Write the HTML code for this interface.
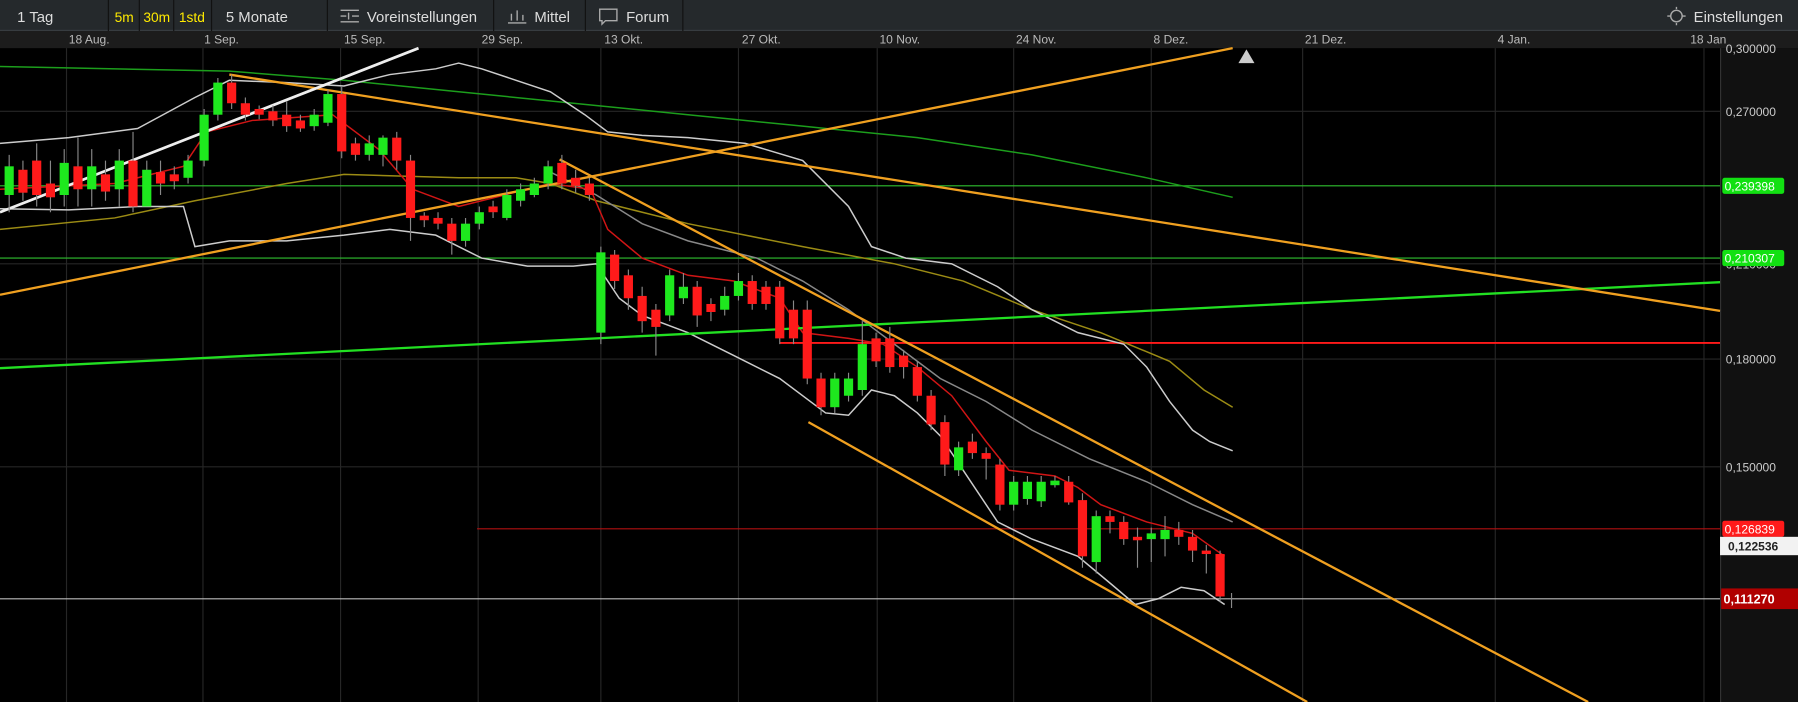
<!DOCTYPE html>
<html><head><meta charset="utf-8"><style>
html,body{margin:0;padding:0;background:#000;overflow:hidden}
svg{display:block}
text{font-family:"Liberation Sans",sans-serif}
</style></head><body>
<svg width="1798" height="702" viewBox="0 0 1568 612" preserveAspectRatio="none" xmlns="http://www.w3.org/2000/svg">
<rect width="1568" height="612" fill="#000"/>
<!-- toolbar -->
<rect x="0" y="0" width="1568" height="27" fill="#25292c"/>
<rect x="0" y="26" width="1568" height="1" fill="#3a3e42"/>
<g fill="#111">
<rect x="94" y="0" width="1" height="27"/><rect x="121" y="0" width="1" height="27"/><rect x="151" y="0" width="1" height="27"/><rect x="184" y="0" width="1" height="27"/><rect x="285" y="0" width="1" height="27"/><rect x="430" y="0" width="1" height="27"/><rect x="510" y="0" width="1" height="27"/><rect x="595" y="0" width="1" height="27"/>
</g>
<g font-size="13" fill="#ddd">
<text x="15" y="19">1 Tag</text>
<text x="100" y="19" fill="#ffea00" font-size="12">5m</text>
<text x="125" y="19" fill="#ffea00" font-size="12">30m</text>
<text x="156" y="19" fill="#ffea00" font-size="12">1std</text>
<text x="197" y="19">5 Monate</text>
<text x="320" y="19">Voreinstellungen</text>
<text x="466" y="19">Mittel</text>
<text x="546" y="19">Forum</text>
<text x="1477" y="19">Einstellungen</text>
</g>
<g stroke="#aaa" stroke-width="1.2" fill="none">
<path d="M297 9h16M297 14h5M307 14h6M297 19h16M304 11v6"/>
<path d="M443 20h16M446 18v-6M451 18v-9M456 18v-5"/>
<path d="M523 8h15v10h-10l-3 3v-3h-2z"/>
<circle cx="1462" cy="14" r="5"/><path d="M1454 14h3M1467 14h3M1462 6v2M1462 20v2"/>
</g>
<!-- date row -->
<rect x="0" y="27" width="1568" height="15" fill="#1c1c1c"/>
<g font-size="10.5" fill="#bbb">
<text x="60" y="38">18 Aug.</text><text x="178" y="38">1 Sep.</text><text x="300" y="38">15 Sep.</text><text x="420" y="38">29 Sep.</text><text x="527" y="38">13 Okt.</text><text x="647" y="38">27 Okt.</text><text x="767" y="38">10 Nov.</text><text x="886" y="38">24 Nov.</text><text x="1006" y="38">8 Dez.</text><text x="1138" y="38">21 Dez.</text><text x="1306" y="38">4 Jan.</text><text x="1474" y="38">18 Jan</text>
</g>
<!-- grid -->
<g stroke="#262626" stroke-width="1">
<path d="M58 42V612M177 42V612M297 42V612M417 42V612M524 42V612M644 42V612M765 42V612M884 42V612M1004 42V612M1136 42V612M1304 42V612M1486 42V612"/>
<path d="M0 97H1500M0 230H1500M0 313H1500M0 407H1500"/>
</g>
<!-- axis panel -->
<rect x="1500" y="42" width="68" height="570" fill="#111"/>
<rect x="1500" y="42" width="1" height="570" fill="#333"/>
<g font-size="10.5" fill="#ccc">
<text x="1505" y="46">0,300000</text><text x="1505" y="101">0,270000</text><text x="1505" y="234">0,210000</text><text x="1505" y="317">0,180000</text><text x="1505" y="411">0,150000</text>
</g>
<!-- horizontal levels -->
<path d="M0 162H1500" stroke="#2fbf2f" stroke-width="1"/>
<path d="M0 225H1500" stroke="#2fbf2f" stroke-width="1"/>
<path d="M416 461H1500" stroke="#b01010" stroke-width="1"/>
<path d="M680 299H1500" stroke="#ff1a1a" stroke-width="1.6"/>
<path d="M0 522H1500" stroke="#bbb" stroke-width="1"/>
<!-- MAs -->
<polyline fill="none" stroke="#1c9e1c" stroke-width="1.3" points="0,58 200,62 300,70 400,80 500,90 600,100 700,110 800,120 900,135 1000,155 1075,172"/>
<polyline fill="none" stroke="#9b8b14" stroke-width="1.3" points="0,200 100,190 170,175 250,160 300,152 400,155 450,155 480,160 520,175 600,195 700,215 780,230 840,245 900,270 960,290 1020,315 1050,340 1075,355"/>
<polyline fill="none" stroke="#888" stroke-width="1.3" points="480,150 520,170 560,195 600,210 660,225 700,245 740,270 780,300 820,330 860,350 900,375 950,400 1000,420 1040,440 1075,455"/>
<polyline fill="none" stroke="#ccc" stroke-width="1.3" points="0,125 60,120 120,112 170,85 200,70 250,72 300,75 340,65 380,60 400,55 420,60 450,70 480,80 510,100 530,115 560,118 600,120 650,125 700,140 740,180 760,215 790,225 830,230 870,250 900,270 940,290 980,300 1000,320 1020,350 1040,375 1055,385 1075,393"/>
<polyline fill="none" stroke="#ccc" stroke-width="1.3" points="0,182 60,183 120,180 160,180 170,215 200,210 250,210 300,205 340,200 380,205 420,225 460,232 500,232 520,230 540,260 560,275 600,290 640,310 680,330 720,360 740,362 760,340 780,345 800,360 820,380 840,410 870,455 900,470 940,485 970,510 990,527 1010,522 1030,512 1050,515 1068,527"/>
<polyline fill="none" stroke="#d01515" stroke-width="1.3" points="0,165 100,160 160,145 180,115 220,105 290,100 330,130 360,165 400,180 440,170 480,160 515,165 530,200 560,225 600,240 640,245 680,260 700,290 740,295 770,300 800,320 830,345 860,385 880,410 920,415 940,425 960,440 1000,455 1040,465 1068,485"/>
<!-- trend lines -->
<path d="M0 321L1500 246" stroke="#22e022" stroke-width="2"/>
<g stroke="#f0a020" stroke-width="2" fill="none">
<path d="M0 257L1075 42"/>
<path d="M200 65L1500 271"/>
<path d="M488 139L1385 612"/>
<path d="M705 368L1140 612"/>
</g>
<path d="M0 185L365 42" stroke="#eee" stroke-width="2.4"/>
<!-- candles -->
<g id="c">
<g stroke="#888" stroke-width="1">
<path d="M8 135V185M20 140V175M32 125V180M44 140V185M56 130V180M68 120V180M80 130V180M92 140V175M104 130V180M116 115V185M128 140V180M140 140V170M152 145V165M164 135V160M178 95V145M190 68V105M202 65V95M214 85V105M226 92V104M238 92V110M250 88V115M262 100V115M274 95V114M286 78V110M298 75V138M310 120V140M322 118V140M334 118V145M346 115V148M358 135V210M370 185V198M382 185V200M394 190V222M406 190V215M418 180V200M430 175V190M442 165V192M454 160V180M466 155V172M478 140V165M490 135V165M502 148V168M514 155V175M524 215V300M536 218V252M548 235V270M560 250V290M572 265V310M584 235V280M596 238V265M608 245V285M620 260V280M632 250V275M644 238V262M656 240V270M668 245V270M680 245V300M692 262V300M704 262V335M716 325V362M728 325V360M740 325V350M752 280V345M764 290V320M776 285V325M788 305V330M800 315V350M812 340V375M824 362V415M836 385V415M848 378V400M860 390V418M872 400V445M884 415V445M896 415V440M908 415V442M920 415V425M932 415V440M944 430V495M956 445V500M968 445V465M980 450V475M992 460V495M1004 460V490M1016 450V485M1028 455V475M1040 462V490M1052 475V500M1064 480V525M1074 517V530"/>
</g>
<g fill="#1ee81e">
<rect x="4" y="145" width="8" height="25"/><rect x="52" y="142" width="8" height="28"/><rect x="76" y="145" width="8" height="20"/><rect x="100" y="140" width="8" height="25"/><rect x="124" y="148" width="8" height="32"/><rect x="160" y="140" width="8" height="15"/><rect x="174" y="100" width="8" height="40"/><rect x="186" y="72" width="8" height="28"/><rect x="270" y="100" width="8" height="10"/><rect x="282" y="82" width="8" height="25"/><rect x="318" y="125" width="8" height="10"/><rect x="330" y="120" width="8" height="15"/><rect x="402" y="195" width="8" height="15"/><rect x="414" y="185" width="8" height="10"/><rect x="438" y="170" width="8" height="20"/><rect x="450" y="165" width="8" height="10"/><rect x="462" y="160" width="8" height="10"/><rect x="474" y="145" width="8" height="15"/><rect x="520" y="220" width="8" height="70"/><rect x="580" y="240" width="8" height="35"/><rect x="592" y="250" width="8" height="10"/><rect x="628" y="258" width="8" height="12"/><rect x="640" y="245" width="8" height="13"/><rect x="724" y="330" width="8" height="25"/><rect x="736" y="330" width="8" height="15"/><rect x="748" y="300" width="8" height="40"/><rect x="832" y="390" width="8" height="20"/><rect x="880" y="420" width="8" height="20"/><rect x="892" y="420" width="8" height="15"/><rect x="904" y="420" width="8" height="17"/><rect x="916" y="419" width="8" height="4"/><rect x="952" y="450" width="8" height="40"/><rect x="1000" y="465" width="8" height="5"/><rect x="1012" y="462" width="8" height="8"/>
</g>
<g fill="#ff1a1a">
<rect x="16" y="148" width="8" height="20"/><rect x="28" y="140" width="8" height="30"/><rect x="40" y="160" width="8" height="12"/><rect x="64" y="145" width="8" height="20"/><rect x="88" y="152" width="8" height="15"/><rect x="112" y="140" width="8" height="40"/><rect x="136" y="150" width="8" height="10"/><rect x="148" y="152" width="8" height="6"/><rect x="198" y="72" width="8" height="18"/><rect x="210" y="90" width="8" height="10"/><rect x="222" y="95" width="8" height="5"/><rect x="234" y="97" width="8" height="8"/><rect x="246" y="100" width="8" height="10"/><rect x="258" y="105" width="8" height="7"/><rect x="294" y="82" width="8" height="50"/><rect x="306" y="125" width="8" height="10"/><rect x="342" y="120" width="8" height="20"/><rect x="354" y="140" width="8" height="50"/><rect x="366" y="188" width="8" height="4"/><rect x="378" y="190" width="8" height="5"/><rect x="390" y="195" width="8" height="15"/><rect x="426" y="180" width="8" height="5"/><rect x="486" y="142" width="8" height="18"/><rect x="498" y="155" width="8" height="7"/><rect x="510" y="160" width="8" height="10"/><rect x="532" y="222" width="8" height="23"/><rect x="544" y="240" width="8" height="20"/><rect x="556" y="258" width="8" height="22"/><rect x="568" y="270" width="8" height="15"/><rect x="604" y="250" width="8" height="25"/><rect x="616" y="265" width="8" height="7"/><rect x="652" y="245" width="8" height="20"/><rect x="664" y="250" width="8" height="15"/><rect x="676" y="250" width="8" height="45"/><rect x="688" y="270" width="8" height="25"/><rect x="700" y="270" width="8" height="60"/><rect x="712" y="330" width="8" height="25"/><rect x="760" y="295" width="8" height="20"/><rect x="772" y="295" width="8" height="25"/><rect x="784" y="310" width="8" height="10"/><rect x="796" y="320" width="8" height="25"/><rect x="808" y="345" width="8" height="25"/><rect x="820" y="368" width="8" height="37"/><rect x="844" y="385" width="8" height="10"/><rect x="856" y="395" width="8" height="5"/><rect x="868" y="405" width="8" height="35"/><rect x="928" y="420" width="8" height="18"/><rect x="940" y="436" width="8" height="49"/><rect x="964" y="450" width="8" height="5"/><rect x="976" y="455" width="8" height="15"/><rect x="988" y="468" width="8" height="3"/><rect x="1024" y="462" width="8" height="6"/><rect x="1036" y="468" width="8" height="12"/><rect x="1048" y="480" width="8" height="3"/><rect x="1060" y="483" width="8" height="37"/>
</g>
</g>
<!-- up arrow marker -->
<path d="M1080 55l7-12 7 12z" fill="#ccc"/>
<!-- axis labels -->
<rect x="1502" y="155" width="54" height="14" rx="2" fill="#12e012"/><text x="1504" y="166" font-size="10.5" fill="#fff">0,239398</text>
<rect x="1502" y="218" width="54" height="14" rx="2" fill="#12e012"/><text x="1504" y="229" font-size="10.5" fill="#fff">0,210307</text>
<rect x="1502" y="454" width="54" height="14" rx="2" fill="#ff1a1a"/><text x="1504" y="465" font-size="10.5" fill="#fff">0,126839</text>
<rect x="1500" y="468" width="68" height="16" fill="#f2f2f2"/><text x="1507" y="480" font-size="10.5" fill="#222" font-weight="bold">0,122536</text>
<rect x="1501" y="513" width="67" height="18" fill="#b00000"/><text x="1503" y="526" font-size="11" fill="#fff" font-weight="bold">0,111270</text>
</svg>
</body></html>
